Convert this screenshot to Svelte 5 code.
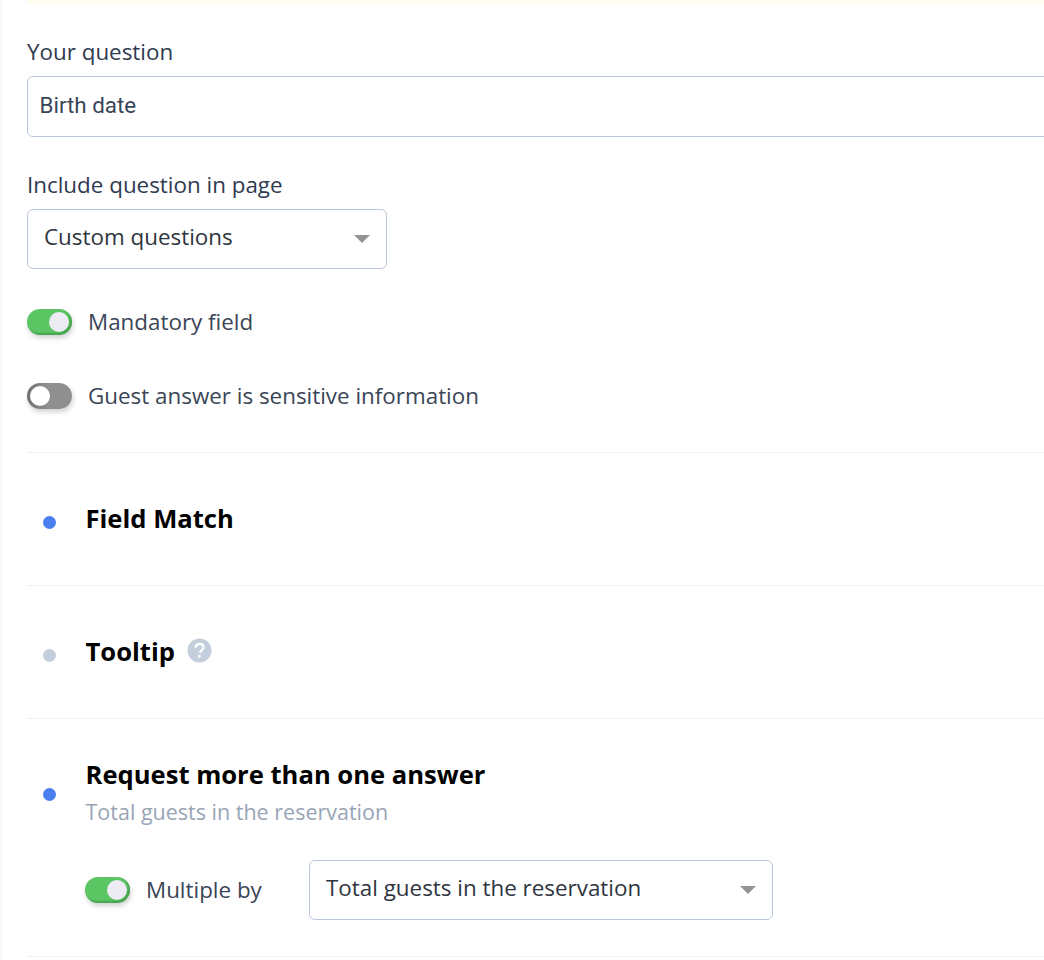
<script>
    let questionText = "Birth date";
</script>

<main class="page">
    <div class="notice"></div>

    <label class="label first" for="question">Your question</label>
    <div class="input" id="question">{questionText}</div>

    <div class="label second">Include question in page</div>
    <div class="select page-select">
        <span>Custom questions</span>
        <i class="caret"></i>
    </div>

    <div class="toggle-row mandatory">
        <span class="toggle on"><b></b></span>
        <span class="toggle-text">Mandatory field</span>
    </div>
    <div class="toggle-row sensitive">
        <span class="toggle"><b></b></span>
        <span class="toggle-text">Guest answer is sensitive information</span>
    </div>

    <section class="option field-match">
        <span class="dot active"></span>
        <h3>Field Match</h3>
    </section>

    <section class="option tooltip">
        <span class="dot"></span>
        <h3>Tooltip</h3>
        <svg class="help" width="25" height="25" viewBox="0 0 25 25">
            <circle cx="12.5" cy="12.5" r="12" fill="#c3cedd" />
            <path d="M8.6 9.6c.2-2.3 1.8-3.6 4-3.6 2.300 0 3.900 1.400 3.900 3.300 0 1.500-.8 2.300-1.900 3.100-.9.600-1.300 1.100-1.300 2.100v.5" fill="none" stroke="#fff" stroke-width="2.300" />
            <rect x="11.100" y="17" width="2.500" height="2.600" fill="#fff" />
        </svg>
    </section>

    <section class="more">
        <div class="more-head">
            <span class="dot active"></span>
            <div>
                <h3>Request more than one answer</h3>
                <p>Total guests in the reservation</p>
            </div>
        </div>
        <div class="multiple">
            <span class="toggle on"><b></b></span>
            <span class="multiple-label">Multiple by</span>
            <div class="select multiple-select">
                <span>Total guests in the reservation</span>
                <i class="caret"></i>
            </div>
        </div>
    </section>
</main>

<style>
    :global(body) {
        margin: 0;
        background: #fff;
        overflow: hidden;
    }

    .page {
        box-sizing: border-box;
        width: 1044px;
        height: 960px;
        padding-left: 27px;
        overflow: hidden;
        font-family: "Open Sans", sans-serif;
        color: #2f3b50;
        background: linear-gradient(to right, #f4f7fc 2px, #fff 2px);
    }

    .notice {
        height: 4px;
        margin-right: -40px;
        background: #fffcf0;
        border-radius: 0 0 6px 6px;
    }

    .label {
        display: block;
        height: 30px;
        font-size: 22.4px;
        line-height: 30px;
    }

    .first {
        margin-top: 33px;
    }

    .second {
        margin-top: 33px;
    }

    .input {
        box-sizing: border-box;
        width: 1100px;
        height: 61px;
        margin-top: 9px;
        padding-left: 11.5px;
        border: 1px solid #bac7d9;
        border-radius: 6px;
        font-family: Roboto, sans-serif;
        font-size: 22.4px;
        line-height: 57px;
        color: #3a4557;
    }

    .select {
        box-sizing: border-box;
        display: flex;
        align-items: center;
        justify-content: space-between;
        height: 60px;
        padding: 0 16px 6px 16px;
        border: 1px solid #bac7d9;
        border-radius: 6px;
        font-size: 22.4px;
        color: #2f3540;
    }

    .page-select {
        width: 360px;
        margin-top: 9px;
    }

    .multiple-select {
        flex: none;
        width: 464px;
        margin-left: 47px;
    }

    .caret {
        width: 0;
        height: 0;
        margin-top: 5px;
        border-left: 8px solid transparent;
        border-right: 8px solid transparent;
        border-top: 8px solid #949494;
    }

    .toggle-row {
        display: flex;
        align-items: center;
        gap: 16px;
        height: 26px;
        font-size: 22.4px;
        color: #3a4557;
    }

    .toggle-text {
        margin-bottom: 2px;
    }

    .mandatory {
        margin-top: 40px;
    }

    .sensitive {
        margin-top: 48px;
    }

    .toggle {
        box-sizing: border-box;
        display: flex;
        flex: none;
        width: 45px;
        height: 26px;
        padding: 3px;
        border-radius: 13px;
        background: linear-gradient(to right, #6f6f6f, #8f8f8f 45%);
        box-shadow: 1px 3px 5px rgba(0, 0, 0, 0.18);
    }

    .toggle.on {
        justify-content: flex-end;
        background: #5cc564;
        box-shadow: 1px 3px 5px rgba(0, 0, 0, 0.18), inset -2px -2px 2px rgba(50, 130, 60, 0.5);
    }

    .toggle b {
        width: 20px;
        height: 20px;
        border-radius: 50%;
        background: #fff;
    }

    .toggle.on b {
        background: #edecf4;
    }

    .option {
        display: flex;
        align-items: center;
        height: 132px;
        border-top: 1px solid #f0f1f5;
    }

    .field-match {
        margin-top: 43px;
    }

    .dot {
        flex: none;
        width: 13px;
        height: 13px;
        margin: 6px 0 0 16px;
        border-radius: 50%;
        background: #c3cedd;
    }

    .dot.active {
        background: #4a7ff0;
    }

    h3 {
        margin: 0 0 0 29.5px;
        font-size: 25.6px;
        font-weight: 700;
        line-height: 34px;
        color: #000;
    }

    .help {
        margin: 0 0 3px 12.5px;
    }

    .more {
        box-sizing: border-box;
        height: 239px;
        padding-top: 39px;
        border-top: 1px solid #f0f1f5;
        border-bottom: 1px solid #f0f1f5;
    }

    .more-head {
        display: flex;
        align-items: center;
    }

    .more-head .dot {
        margin-top: 4px;
    }

    p {
        margin: 5px 0 0 29.5px;
        font-size: 21.5px;
        line-height: 30px;
        color: #98a5b5;
    }

    .multiple {
        display: flex;
        align-items: center;
        margin: 33px 0 0 58px;
    }

    .multiple-label {
        flex: none;
        width: 116px;
        margin: 0 0 2px 16px;
        font-size: 22.4px;
        color: #3a4557;
    }
</style>
